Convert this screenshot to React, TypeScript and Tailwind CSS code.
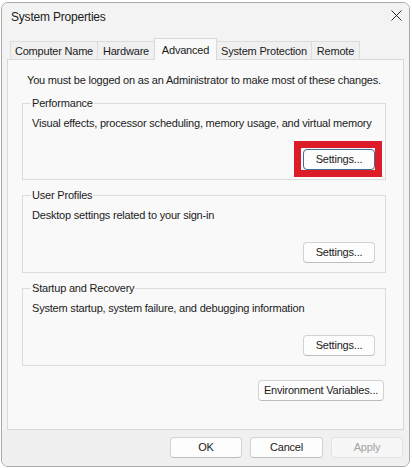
import type { ReactNode } from "react";

function Btn({
  children,
  className = "",
  disabled = false,
  primary = false,
}: {
  children: ReactNode;
  className?: string;
  disabled?: boolean;
  primary?: boolean;
}) {
  const tone = disabled
    ? "border-[#e3e3e3] bg-[#f7f7f7] text-[#a3a3a3]"
    : primary
      ? "border-[#3b6f94] bg-[#fdfdfd] text-[#1b1b1b]"
      : "border-[#d2d2d2] border-b-[#bdbdbd] bg-[#fdfdfd] text-[#1b1b1b]";
  return (
    <button
      type="button"
      disabled={disabled}
      className={`flex h-[21px] items-center justify-center whitespace-nowrap rounded-[4px] border ${tone} ${className}`}
    >
      {children}
    </button>
  );
}

function Group({
  title,
  desc,
  highlight = false,
  className = "",
}: {
  title: string;
  desc: string;
  highlight?: boolean;
  className?: string;
}) {
  return (
    <fieldset className={`ml-[14px] w-[364px] border border-[#dcdcdc] pl-[9px] pr-[10px] pb-[9px] ${className}`}>
      <legend className="-ml-[1px] px-px leading-[16px]">{title}</legend>
      <p className="mt-[4px] whitespace-nowrap leading-[16px]">{desc}</p>
      <div className={`flex justify-end ${highlight ? "mt-[18px]" : "mt-[19px]"}`}>
        <div className="relative">
          <Btn primary={highlight} className="w-[72px]">
            Settings...
          </Btn>
          {highlight ? (
            <div className="pointer-events-none absolute -left-[9px] -right-[7px] -top-[8px] -bottom-[7px] border-[7px] border-[#dc1c28]" />
          ) : null}
        </div>
      </div>
    </fieldset>
  );
}

const tabs = [
  { label: "Computer Name", w: "w-[88px]" },
  { label: "Hardware", w: "w-[58px]" },
  { label: "Advanced", w: "w-[63px]", active: true },
  { label: "System Protection", w: "w-[96px]" },
  { label: "Remote", w: "w-[49px]" },
];

export default function App() {
  return (
    <div className="h-[468px] w-[412px] overflow-hidden bg-white font-['Liberation_Sans',Arial,sans-serif] text-[11px] tracking-[-0.2px] text-[#1b1b1b]">
      <div className="ml-px mt-[2px] flex h-[465px] w-[409px] flex-col overflow-hidden rounded-[7px] border border-[#a9a9a9] bg-[#f0f0f0]">
        {/* title bar */}
        <div className="flex h-[35px] items-start justify-between bg-[#f3f3f3] pl-[9px] pr-[7px] pt-[6px]">
          <span className="text-[12px] leading-[16px]">System Properties</span>
          <svg width="11" height="11" viewBox="0 0 11 11" className="mt-[1px]">
            <path d="M0.5 0.5 L10.5 10.5 M10.5 0.5 L0.5 10.5" stroke="#2a2a2a" strokeWidth="1" fill="none" />
          </svg>
        </div>

        {/* tabs */}
        <div className="bg-[#f3f3f3] px-[5px]">
          <div className="flex h-[21px] items-end pl-[3px]">
            {tabs.map((t) =>
              t.active ? (
                <div
                  key={t.label}
                  className={`relative z-10 -mb-px -ml-px flex h-[22px] ${t.w} items-start justify-center whitespace-nowrap border border-b-0 border-[#d9d9d9] bg-[#f9f9f9] pt-[3px] leading-[16px]`}
                >
                  {t.label}
                </div>
              ) : (
                <div
                  key={t.label}
                  className={`-ml-px flex h-[18px] ${t.w} items-center justify-center whitespace-nowrap border border-b-0 border-[#dcdcdc] bg-[#f0f0f0] leading-[16px] first:ml-0`}
                >
                  {t.label}
                </div>
              ),
            )}
          </div>
        </div>

        {/* panel */}
        <div className="bg-[#f3f3f3] px-[5px]">
          <div className="flex h-[371px] flex-col border border-[#d9d9d9] bg-[#f9f9f9] pt-[12px]">
            <p className="whitespace-nowrap pl-[19px] leading-[16px]">
              You must be logged on as an Administrator to make most of these changes.
            </p>
            <Group
              className="mt-[7px]"
              title="Performance"
              desc="Visual effects, processor scheduling, memory usage, and virtual memory"
              highlight
            />
            <Group className="mt-[7px]" title="User Profiles" desc="Desktop settings related to your sign-in" />
            <Group
              className="mt-[7px]"
              title="Startup and Recovery"
              desc="System startup, system failure, and debugging information"
            />
            <div className="mt-[14px] flex justify-end pr-[19px]">
              <Btn className="w-[126px]">Environment Variables...</Btn>
            </div>
          </div>
        </div>

        {/* bottom bar */}
        <div className="flex flex-1 justify-end gap-[8px] bg-[#f0f0f0] pr-[6px] pt-[7px]">
          <Btn className="w-[72px]">OK</Btn>
          <Btn className="w-[73px]">Cancel</Btn>
          <Btn className="w-[72px]" disabled>
            Apply
          </Btn>
        </div>
      </div>
    </div>
  );
}
